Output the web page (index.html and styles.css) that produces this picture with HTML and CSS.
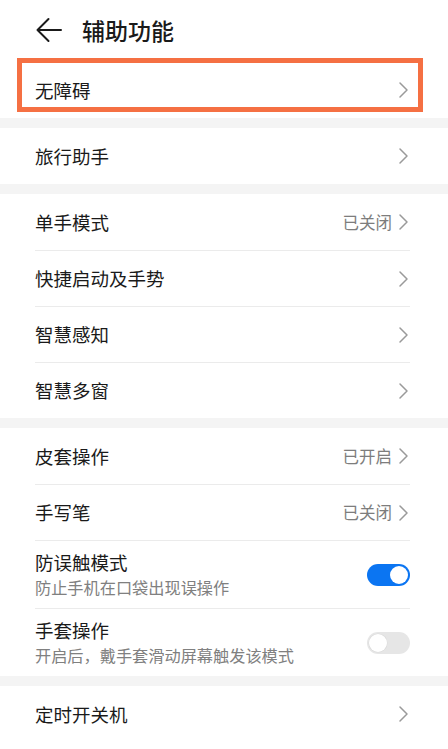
FILE: index.html
```html
<!DOCTYPE html>
<html lang="zh-CN">
<head>
<meta charset="utf-8">
<title>辅助功能</title>
<link rel="stylesheet" href="styles.css">
</head>
<body>
<div class="page">
  <header class="header">
    <svg class="back" width="26" height="26" viewBox="0 0 26 26" aria-hidden="true">
      <path d="M12.5 2 L1.5 13 L12.5 24 M1.5 13 H25" fill="none" stroke="#1a1a1a" stroke-width="2" stroke-linecap="round" stroke-linejoin="round"/>
    </svg>
    <h1 class="title">辅助功能</h1>
  </header>

  <section class="group group-first">
    <div class="highlight"></div>
    <div class="row">
      <span class="label">无障碍</span>
      <span class="right"><svg class="chev" width="12" height="18" viewBox="0 0 12 18"><path d="M2 2 L9 9 L2 16" fill="none" stroke="#9a9a9a" stroke-width="1.5" stroke-linecap="round" stroke-linejoin="round"/></svg></span>
    </div>
  </section>

  <section class="group">
    <div class="row">
      <span class="label">旅行助手</span>
      <span class="right"><svg class="chev" width="12" height="18" viewBox="0 0 12 18"><path d="M2 2 L9 9 L2 16" fill="none" stroke="#9a9a9a" stroke-width="1.5" stroke-linecap="round" stroke-linejoin="round"/></svg></span>
    </div>
  </section>

  <section class="group">
    <div class="row">
      <span class="label">单手模式</span>
      <span class="right"><span class="value">已关闭</span><svg class="chev" width="12" height="18" viewBox="0 0 12 18"><path d="M2 2 L9 9 L2 16" fill="none" stroke="#9a9a9a" stroke-width="1.5" stroke-linecap="round" stroke-linejoin="round"/></svg></span>
    </div>
    <div class="row divided">
      <span class="label">快捷启动及手势</span>
      <span class="right"><svg class="chev" width="12" height="18" viewBox="0 0 12 18"><path d="M2 2 L9 9 L2 16" fill="none" stroke="#9a9a9a" stroke-width="1.5" stroke-linecap="round" stroke-linejoin="round"/></svg></span>
    </div>
    <div class="row divided">
      <span class="label">智慧感知</span>
      <span class="right"><svg class="chev" width="12" height="18" viewBox="0 0 12 18"><path d="M2 2 L9 9 L2 16" fill="none" stroke="#9a9a9a" stroke-width="1.5" stroke-linecap="round" stroke-linejoin="round"/></svg></span>
    </div>
    <div class="row divided">
      <span class="label">智慧多窗</span>
      <span class="right"><svg class="chev" width="12" height="18" viewBox="0 0 12 18"><path d="M2 2 L9 9 L2 16" fill="none" stroke="#9a9a9a" stroke-width="1.5" stroke-linecap="round" stroke-linejoin="round"/></svg></span>
    </div>
  </section>

  <section class="group">
    <div class="row">
      <span class="label">皮套操作</span>
      <span class="right"><span class="value">已开启</span><svg class="chev" width="12" height="18" viewBox="0 0 12 18"><path d="M2 2 L9 9 L2 16" fill="none" stroke="#9a9a9a" stroke-width="1.5" stroke-linecap="round" stroke-linejoin="round"/></svg></span>
    </div>
    <div class="row divided">
      <span class="label">手写笔</span>
      <span class="right"><span class="value">已关闭</span><svg class="chev" width="12" height="18" viewBox="0 0 12 18"><path d="M2 2 L9 9 L2 16" fill="none" stroke="#9a9a9a" stroke-width="1.5" stroke-linecap="round" stroke-linejoin="round"/></svg></span>
    </div>
    <div class="row divided tall">
      <span class="texts">
        <span class="label">防误触模式</span>
        <span class="sub">防止手机在口袋出现误操作</span>
      </span>
      <span class="toggle on"><span class="knob"></span></span>
    </div>
    <div class="row divided tall">
      <span class="texts">
        <span class="label">手套操作</span>
        <span class="sub">开启后，戴手套滑动屏幕触发该模式</span>
      </span>
      <span class="toggle off"><span class="knob"></span></span>
    </div>
  </section>

  <section class="group">
    <div class="row">
      <span class="label">定时开关机</span>
      <span class="right"><svg class="chev" width="12" height="18" viewBox="0 0 12 18"><path d="M2 2 L9 9 L2 16" fill="none" stroke="#9a9a9a" stroke-width="1.5" stroke-linecap="round" stroke-linejoin="round"/></svg></span>
    </div>
  </section>
</div>
</body>
</html>
```

FILE: styles.css
```css
* { box-sizing: border-box; }

html, body {
  margin: 0;
  padding: 0;
  background: #ffffff;
}

body {
  font-family: "Noto Sans CJK SC", "Noto Sans", sans-serif;
  color: #1a1a1a;
  width: 448px;
  height: 749px;
  overflow: hidden;
}

.page {
  display: flex;
  flex-direction: column;
  gap: 10px;
  background: #f4f4f4;
}

.header {
  display: flex;
  align-items: center;
  height: 58px;
  padding-left: 36px;
  padding-top: 2px;
  background: #ffffff;
  margin-bottom: -10px;
}

.back {
  display: block;
  flex: none;
}

.title {
  margin: 0 0 0 20px;
  font-size: 23px;
  font-weight: 500;
  line-height: 1;
  color: #1a1a1a;
}

.group {
  background: #ffffff;
  display: flex;
  flex-direction: column;
}

.group-first {
  position: relative;
  padding-top: 4px;
}

.highlight {
  position: absolute;
  top: 0;
  left: 17px;
  width: 406px;
  height: 54px;
  border: 5px solid #f57043;
  pointer-events: none;
}

.row {
  display: flex;
  align-items: center;
  justify-content: space-between;
  height: 56px;
  margin: 0 38px 0 35px;
}

.row.tall {
  height: 68px;
}

.row.divided {
  border-top: 1px solid #ebebeb;
}

.label {
  font-size: 18.5px;
  line-height: 1.2;
  color: #1a1a1a;
}

.right {
  display: flex;
  align-items: center;
  gap: 6px;
}

.value {
  font-size: 16.5px;
  color: #7d7d7d;
  line-height: 1;
}

.chev {
  display: block;
}

.texts {
  display: flex;
  flex-direction: column;
  gap: 4px;
}

.sub {
  font-size: 16.2px;
  line-height: 1.3;
  color: #808080;
}

.toggle {
  position: relative;
  flex: none;
  width: 43px;
  height: 22px;
  border-radius: 11px;
}

.toggle.on {
  background: #0b75f2;
}

.toggle.off {
  background: #e6e6e6;
}

.knob {
  position: absolute;
  top: 2px;
  width: 18px;
  height: 18px;
  border-radius: 50%;
  background: #ffffff;
}

.toggle.on .knob {
  right: 2px;
}

.toggle.off .knob {
  left: 2px;
  box-shadow: 0 0 0 0.5px #d9d9d9;
}
```
